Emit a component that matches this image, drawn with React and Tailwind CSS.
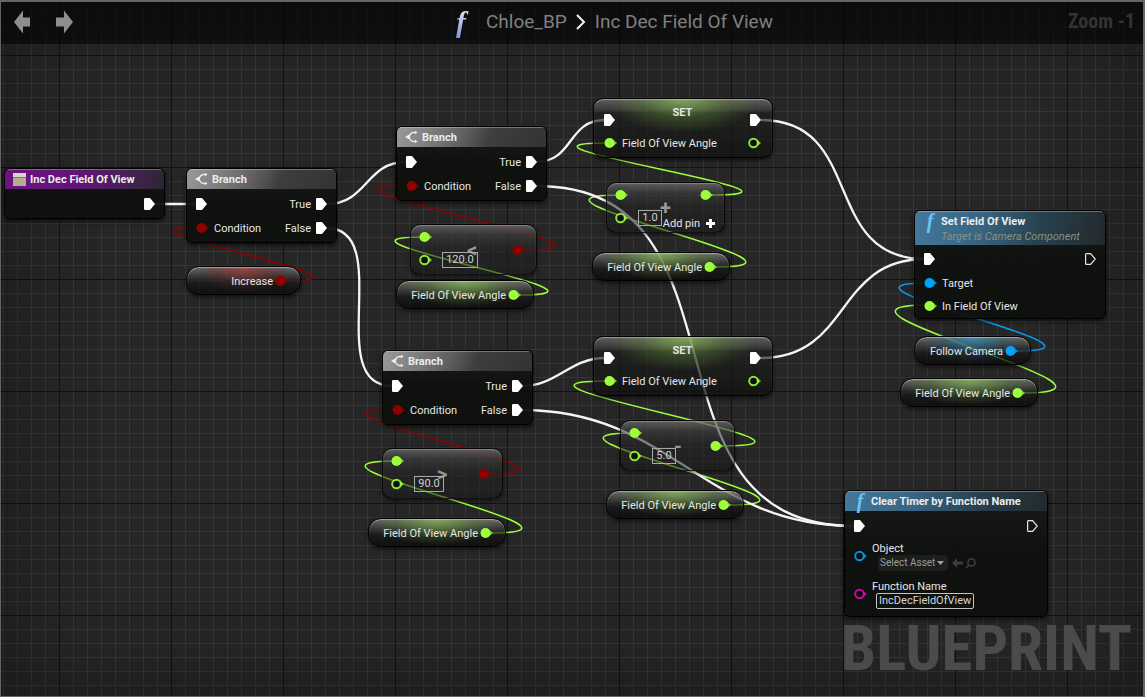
import React from "react";

const GREEN = "#9dff3c";
const RED = "#8f0000";
const BLUE = "#00a3f5";
const PINK = "#f000c0";

const loose = (x1, y1, x2, y2, d) => `M${x1} ${y1} C${x1 + d} ${y1} ${x2 - d} ${y2} ${x2} ${y2}`;

const execWires = [
  [155, 204, 197, 204, 10],
  [327, 204, 406, 162, 40],
  [326, 228, 392, 386, 70],
  [536, 162, 605, 120, 38],
  [536, 186, 854, 526, 225],
  [522, 386, 605, 358, 35],
  [522, 410, 854, 526, 150],
  [761, 120, 925, 259, 105],
  [761, 358, 925, 259, 90],
];

const dataWires = [
  [RED, 285, 281, 203, 227, 124],
  [RED, 523, 250, 409, 185, 145],
  [RED, 489, 474, 396, 409, 132],
  [GREEN, 519, 295, 424, 237, 129],
  [GREEN, 491, 533, 396, 461, 136],
  [GREEN, 711, 195, 608, 143, 138],
  [GREEN, 715, 267, 620, 195, 136],
  [GREEN, 721, 446, 608, 381, 152],
  [GREEN, 729, 505, 634, 433, 136],
  [BLUE, 1016, 351, 928, 283, 127],
  [GREEN, 1023, 393, 928, 305, 143],
];

function Wires() {
  return (
    <svg className="pointer-events-none absolute left-0 top-0" width="1145" height="697" fill="none" aria-hidden="true">
      {dataWires.map(([c, ...p]) => (
        <path key={p.join()} d={loose(...p)} stroke={c} strokeWidth="1.5" />
      ))}
      {execWires.map((p) => (
        <path key={p.join()} d={loose(...p)} stroke="#f4f4f4" strokeWidth="2.3" />
      ))}
    </svg>
  );
}

function Exec({ open }) {
  return (
    <svg className="shrink-0" width="11" height="12" viewBox="0 0 11 12" aria-hidden="true">
      {open ? (
        <path d="M1.5.6H5.6L10.3 6L5.6 11.4H1.5Q.6 11.4 .6 10.5V1.5Q.6 .6 1.5 .6Z" fill="none" stroke="#e8e8e8" strokeWidth="1.2" />
      ) : (
        <path d="M1.2 0H6L11 6L6 12H1.2Q0 12 0 10.8V1.2Q0 0 1.2 0Z" fill="#fff" />
      )}
    </svg>
  );
}

function Pin({ color, open }) {
  return (
    <svg className="shrink-0" width="13" height="12" viewBox="0 0 13 12" aria-hidden="true">
      <path d="M9 2.8L13 6L9 9.2Z" fill={color} opacity="0.75" />
      {open ? (
        <circle cx="5.5" cy="6" r="4.3" fill="#0a0c0a" stroke={color} strokeWidth="2" opacity="0.88" />
      ) : (
        <circle cx="5.5" cy="6" r="5" fill={color} />
      )}
    </svg>
  );
}

function BranchIcon() {
  return (
    <svg width="13" height="14" viewBox="0 0 13 14" fill="none" stroke="#ededed" aria-hidden="true">
      <path d="M11 2.6H8.6C6.2 2.8 4.6 4.6 4.2 7C4.6 9.4 6.2 11.2 8.6 11.4H11" strokeWidth="1.5" />
      <path d="M0 7L3.2 4.9H4.6V9.1H3.2Z" fill="#ededed" stroke="none" />
      <path d="M10 .9L12.6 2.6L10 4.3ZM10 9.7L12.6 11.4L10 13.1Z" fill="#ededed" stroke="none" />
    </svg>
  );
}

function FunctionIcon() {
  return (
    <span aria-hidden="true" className="w-[14px] text-center font-['Liberation_Serif',serif] text-xl font-bold italic leading-4 text-[#6cc4f5]">
      f
    </span>
  );
}

function Label({ children }) {
  return <span className="pt-px leading-4">{children}</span>;
}

const heads = {
  purple: "bg-[linear-gradient(100deg,#6d1384_0%,#5f1574_50%,#3d2446_85%,#2c2430_100%)]",
  gray: "bg-[linear-gradient(110deg,#9a9a9a_0%,#757575_30%,#565656_50%,#3e3e3e_62%,#333_100%)]",
  blue: "bg-[linear-gradient(100deg,#44789b_0%,#386482_35%,#28414f_65%,#23292d_100%)]",
};

function Node({ className, tone, icon, title, subtitle, children }) {
  return (
    <section className={`absolute overflow-hidden rounded-md border border-black bg-[linear-gradient(180deg,rgba(24,26,23,0.92),rgba(13,16,13,0.95)_50%)] shadow-[0_2px_5px_rgba(0,0,0,0.7)] ${className}`}>
      <header className={`flex min-h-5 gap-1 px-2 shadow-[inset_0_1px_0_rgba(255,255,255,0.3)] ${heads[tone]}`}>
        <span className="flex h-5 items-center">{icon}</span>
        <div>
          <h2 className="pt-0.5 text-[11px] font-bold leading-[18px] text-[#ececec]">{title}</h2>
          {subtitle && <p className="-mt-px pb-px text-[11px] italic leading-[14px] text-[#87937d]">{subtitle}</p>}
        </div>
      </header>
      {children}
    </section>
  );
}

function Row({ children, className = "h-6" }) {
  return <div className={`flex items-center justify-between px-[9px] ${className}`}>{children}</div>;
}

function Side({ children }) {
  return <div className="flex items-center gap-[5px]">{children}</div>;
}

function Branch({ className }) {
  return (
    <Node className={`w-[151px] ${className}`} tone="gray" icon={<BranchIcon />} title="Branch">
      <div className="pb-0.5 pt-[3px]">
        <Row>
          <Exec />
          <Side>
            <Label>True</Label>
            <Exec />
          </Side>
        </Row>
        <Row>
          <Side>
            <Pin color={RED} />
            <Label>Condition</Label>
          </Side>
          <Side>
            <Label>False</Label>
            <Exec />
          </Side>
        </Row>
      </div>
    </Node>
  );
}

function SetNode({ className }) {
  return (
    <section className={`absolute w-[180px] rounded-[10px] border border-black bg-[radial-gradient(ellipse_76px_34px_at_50%_0,rgba(140,190,90,0.75),rgba(110,160,60,0.3)_55%,transparent),linear-gradient(180deg,rgba(110,110,110,0.75),rgba(70,70,70,0.6)_18%,rgba(28,30,28,0.65)_24%,rgba(14,16,14,0.75))] pl-[10px] pr-[11px] pt-[3px] shadow-[inset_0_1px_1px_rgba(220,220,220,0.5),0_2px_4px_rgba(0,0,0,0.6)] ${className}`}>
      <div className="flex h-6 items-end justify-between">
        <Exec />
        <h2 className="self-start pt-0.5 text-[11px] font-bold leading-[18px]">SET</h2>
        <Exec />
      </div>
      <div className="mt-[3px] flex h-7 items-center justify-between">
        <Side>
          <Pin color={GREEN} />
          <Label>Field Of View Angle</Label>
        </Side>
        <Pin color={GREEN} open />
      </div>
    </section>
  );
}

function OpNode({ className, label, value, valueClass, symbol, symbolClass, out, outClass, children }) {
  return (
    <section aria-label={label} className={`absolute flex h-[51px] rounded-[10px] border border-black/80 bg-[linear-gradient(180deg,rgba(105,105,105,0.8),rgba(60,60,60,0.6)_22%,rgba(34,34,34,0.55)_50%,rgba(24,24,24,0.55))] pl-2 pr-[11px] shadow-[inset_0_1px_1px_rgba(200,200,200,0.4),0_2px_4px_rgba(0,0,0,0.5)] ${className}`}>
      <div className="flex flex-col gap-[11px] pt-[6px]">
        <Pin color={GREEN} />
        <Pin color={GREEN} open />
      </div>
      <span aria-hidden="true" className={`absolute text-xl font-bold leading-5 text-[#979797] ${symbolClass}`}>
        {symbol}
      </span>
      <input
        aria-label={`${label} value`}
        defaultValue={value}
        className={`relative ml-[10px] mt-[27px] h-4 border border-[#a8a8a8] bg-transparent pt-px text-center text-[11px] text-[#d0d0d0] outline-none ${valueClass}`}
      />
      {children}
      <div className={`ml-auto ${outClass}`}>
        <Pin color={out} />
      </div>
    </section>
  );
}

const glows = {
  green: "bg-[radial-gradient(ellipse_66px_26px_at_50%_0,rgba(140,190,90,0.75),rgba(100,150,55,0.3)_60%,transparent),linear-gradient(180deg,rgba(120,120,120,0.8),rgba(60,60,60,0.75)_35%,rgba(20,20,20,0.7)_60%,rgba(10,10,10,0.8))]",
  red: "bg-[radial-gradient(ellipse_48px_26px_at_50%_0,rgba(165,60,60,0.75),rgba(120,35,35,0.3)_60%,transparent),linear-gradient(180deg,rgba(120,120,120,0.8),rgba(60,60,60,0.75)_35%,rgba(20,20,20,0.7)_60%,rgba(10,10,10,0.8))]",
  blue: "bg-[radial-gradient(ellipse_52px_26px_at_50%_0,rgba(50,145,190,0.75),rgba(35,100,135,0.3)_60%,transparent),linear-gradient(180deg,rgba(120,120,120,0.8),rgba(60,60,60,0.75)_35%,rgba(20,20,20,0.7)_60%,rgba(10,10,10,0.8))]",
};

function Variable({ className, glow = "green", color = GREEN, children }) {
  return (
    <section className={`absolute flex h-[29px] items-center justify-end gap-0.5 rounded-[13px] border border-black pr-3 shadow-[inset_0_1px_1px_rgba(220,220,220,0.55),0_2px_4px_rgba(0,0,0,0.6)] ${glows[glow]} ${className}`}>
      <span className="pt-[3px] leading-4">{children}</span>
      <Pin color={color} />
    </section>
  );
}

function TopBar() {
  return (
    <header className="z-10 col-start-1 row-start-1 flex h-11 items-center self-start bg-black/60 pl-[14px] pr-[10px]">
      <nav aria-label="History" className="flex gap-[26px]">
        <button type="button" aria-label="Back">
          <svg width="16" height="24" viewBox="0 0 16 24" aria-hidden="true">
            <path d="M0 12L9 .5V7.5H16V16.5H9V23.5Z" fill="#8f8f8f" />
          </svg>
        </button>
        <button type="button" aria-label="Forward">
          <svg width="17" height="24" viewBox="0 0 17 24" aria-hidden="true">
            <path d="M17 12L8 .5V7.5H0V16.5H8V23.5Z" fill="#8f8f8f" />
          </svg>
        </button>
      </nav>
      <div className="flex flex-1 items-center justify-center pl-20">
        <span aria-hidden="true" className="mr-3 bg-linear-to-b from-[#e6edff] to-[#7f93d8] bg-clip-text px-2 font-['Liberation_Serif',serif] text-[30px] font-bold italic leading-8 text-transparent">
          f
        </span>
        <a href="#chloe" className="text-[19px] leading-6 text-[#808080]">Chloe_BP</a>
        <svg className="mx-[9px]" width="10" height="16" viewBox="0 0 10 16" fill="none" stroke="#f2f2f2" strokeWidth="2" aria-hidden="true">
          <path d="M1 1L8 8L1 15" />
        </svg>
        <h1 className="text-[19px] leading-6 text-[#808080]">Inc Dec Field Of View</h1>
      </div>
      <p className="pb-[3px] font-['Roboto_Condensed','Liberation_Sans_Narrow',Roboto,sans-serif] text-xl font-bold text-[#333]">Zoom -1</p>
    </header>
  );
}

export default function App() {
  return (
    <div className="grid min-h-screen bg-[#262626] font-['Roboto',sans-serif] text-[11px] text-[#e6e6e6]">
      <TopBar />
      <main className="relative col-start-1 row-start-1 min-h-screen overflow-hidden bg-[linear-gradient(to_right,#121212_1px,transparent_1px),linear-gradient(to_bottom,#121212_1px,transparent_1px),linear-gradient(to_right,#353535_1px,transparent_1px),linear-gradient(to_bottom,#353535_1px,transparent_1px)] bg-[length:112px_112px,112px_112px,14px_14px,14px_14px] bg-[position:59px_55px,59px_55px,3px_13px,3px_13px]">
        <div className="pointer-events-none absolute inset-0 shadow-[inset_0_0_90px_rgba(0,0,0,0.4)]" />
        <p className="absolute bottom-[10px] right-[13px] font-['Roboto_Condensed','Liberation_Sans_Narrow',Roboto,sans-serif] text-[63px] font-bold leading-[76px] text-[#4b4b4b]">
          BLUEPRINT
        </p>
        <Wires />

        <Node
          className="left-[4px] top-[168px] w-[161px]"
          tone="purple"
          title="Inc Dec Field Of View"
          icon={
            <svg width="13" height="13" viewBox="0 0 13 13" aria-hidden="true">
              <path d="M0 0H13V13H0Z" fill="#b5ab8e" />
              <path d="M0 0H13V4H0Z" fill="#d8d5cc" />
              <path d="M0 4H13V5H0Z" fill="#857c68" />
            </svg>
          }
        >
          <div className="flex h-[29px] items-center justify-end px-[9px]">
            <Exec />
          </div>
        </Node>

        <Branch className="left-[186px] top-[168px]" />
        <Branch className="left-[396px] top-[126px]" />
        <Branch className="left-[382px] top-[350px]" />

        <SetNode className="left-[593px] top-[98px]" />
        <SetNode className="left-[593px] top-[336px]" />

        <OpNode className="left-[606px] top-[182px] w-[119px]" label="Add" value="1.0" valueClass="w-6" symbol="+" symbolClass="left-[53px] top-[15px]" out={GREEN} outClass="pt-[6px]">
          <button type="button" className="absolute bottom-0 right-[9px] flex items-center gap-[6px] leading-4">
            <Label>Add pin</Label>
            <svg width="9" height="9" viewBox="0 0 9 9" fill="#fff" aria-hidden="true">
              <path d="M3 0H6V3H9V6H6V9H3V6H0V3H3Z" />
            </svg>
          </button>
        </OpNode>
        <OpNode className="left-[410px] top-[224px] w-[127px]" label="Less than" value="120.0" valueClass="w-9" symbol="<" symbolClass="left-[56px] top-[15px]" out={RED} outClass="pt-[19px]" />
        <OpNode className="left-[382px] top-[448px] w-[121px]" label="Greater than" value="90.0" valueClass="w-[30px]" symbol=">" symbolClass="left-[54px] top-[15px]" out={RED} outClass="pt-[19px]" />
        <OpNode className="left-[620px] top-[420px] w-[115px]" label="Subtract" value="5.0" valueClass="w-6" symbol="-" symbolClass="left-[53px] top-[15px]" out={GREEN} outClass="pt-[19px]" />

        <Variable className="left-[186px] top-[266px] w-[115px]" glow="red" color={RED}>Increase</Variable>
        <Variable className="left-[396px] top-[280px] w-[138px]">Field Of View Angle</Variable>
        <Variable className="left-[592px] top-[252px] w-[138px]">Field Of View Angle</Variable>
        <Variable className="left-[606px] top-[490px] w-[138px]">Field Of View Angle</Variable>
        <Variable className="left-[368px] top-[518px] w-[138px]">Field Of View Angle</Variable>
        <Variable className="left-[900px] top-[378px] w-[138px]">Field Of View Angle</Variable>
        <Variable className="left-[914px] top-[336px] w-[117px]" glow="blue" color={BLUE}>Follow Camera</Variable>

        <Node className="left-[914px] top-[210px] w-[192px]" tone="blue" icon={<FunctionIcon />} title="Set Field Of View" subtitle="Target is Camera Component">
          <div className="pb-px pt-0.5">
            <Row>
              <Exec />
              <Exec open />
            </Row>
            <Row>
              <Side>
                <Pin color={BLUE} />
                <Label>Target</Label>
              </Side>
            </Row>
            <Row className="h-[22px]">
              <Side>
                <Pin color={GREEN} />
                <Label>In Field Of View</Label>
              </Side>
            </Row>
          </div>
        </Node>

        <Node className="left-[844px] top-[490px] w-[204px]" tone="blue" icon={<FunctionIcon />} title="Clear Timer by Function Name">
          <div className="pb-[7px] pt-[3px]">
            <Row>
              <Exec />
              <Exec open />
            </Row>
            <div className="mt-[3px] flex items-center gap-[5px] px-[9px]">
              <Pin color={BLUE} open />
              <div>
                <label htmlFor="object" className="block pt-0.5 leading-3">Object</label>
                <div className="flex items-center gap-1 pl-[6px]">
                  <div className="relative">
                    <select id="object" className="block h-4 w-[70px] appearance-none rounded-sm bg-[#1d1f1d] px-0.5 text-[10px] leading-4 text-[#9b9b9b] outline-none">
                      <option>Select Asset</option>
                    </select>
                    <svg className="pointer-events-none absolute right-1 top-[6px]" width="7" height="4" viewBox="0 0 7 4" fill="#a0a0a0" aria-hidden="true">
                      <path d="M0 0H7L3.5 4Z" />
                    </svg>
                  </div>
                  <button type="button" aria-label="Use selected asset">
                    <svg width="11" height="10" viewBox="0 0 11 10" fill="#3b3d3b" aria-hidden="true">
                      <path d="M0 5L5 0V3.4H11V6.6H5V10Z" />
                    </svg>
                  </button>
                  <button type="button" aria-label="Browse to asset" className="-ml-0.5">
                    <svg width="11" height="11" viewBox="0 0 11 11" fill="none" stroke="#3b3d3b" strokeWidth="1.6" aria-hidden="true">
                      <circle cx="6.5" cy="4.5" r="3.6" />
                      <path d="M4 7L.8 10.2" />
                    </svg>
                  </button>
                </div>
              </div>
            </div>
            <div className="mt-2 flex items-center gap-[5px] px-[9px]">
              <Pin color={PINK} open />
              <div>
                <label htmlFor="function-name" className="block pt-0.5 leading-3">Function Name</label>
                <input id="function-name" defaultValue="IncDecFieldOfView" className="ml-1 block h-4 w-[98px] rounded-xs border border-[#c4c4c4] bg-transparent px-0.5 text-center text-[11px] text-[#d6d6d6] outline-none" />
              </div>
            </div>
          </div>
        </Node>
      </main>
      <div className="pointer-events-none z-20 col-start-1 row-start-1 border-b border-l border-r-2 border-t-2 border-[#646464]" />
    </div>
  );
}
